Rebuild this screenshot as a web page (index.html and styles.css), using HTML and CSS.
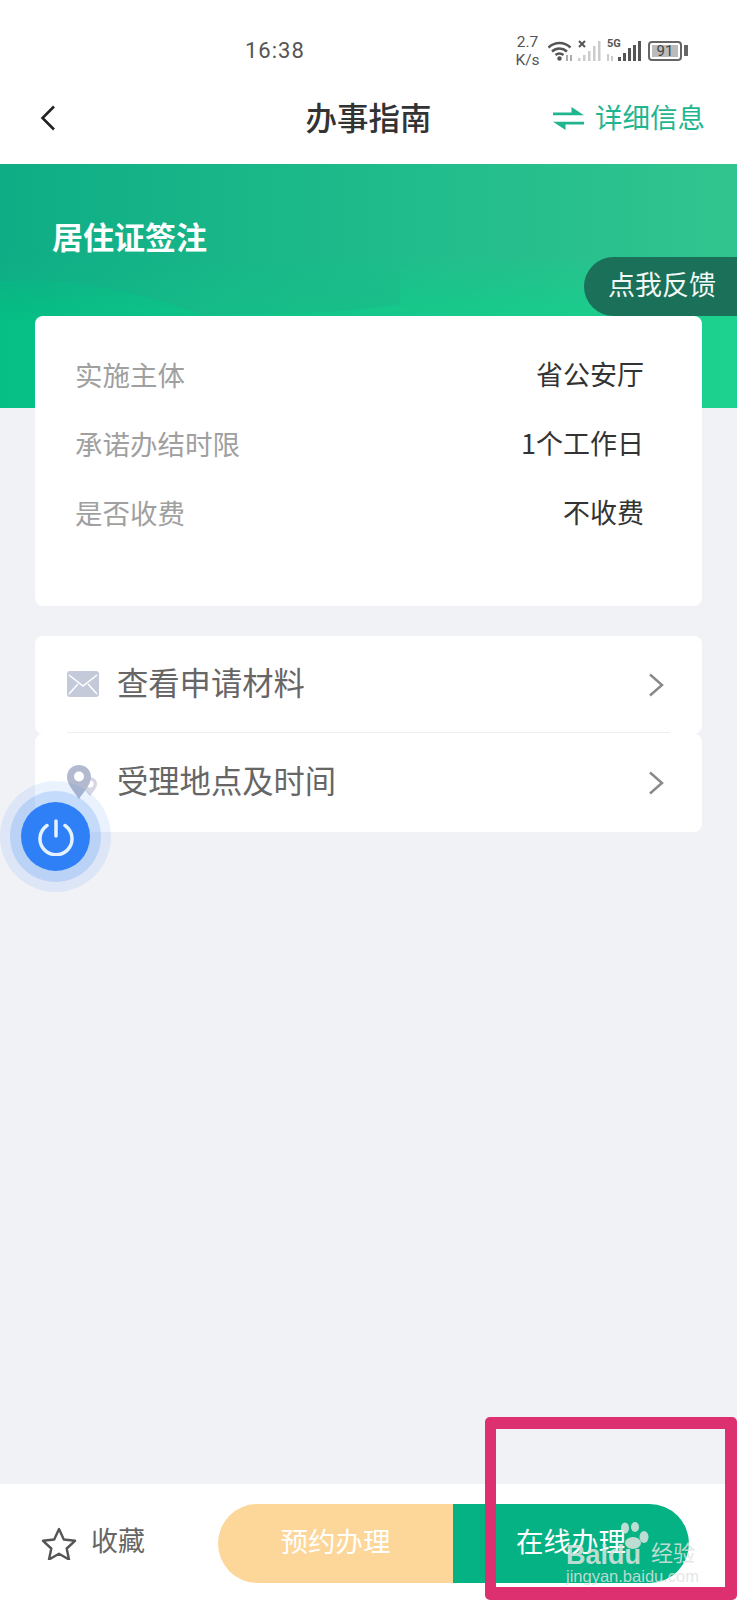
FILE: index.html
```html
<!DOCTYPE html>
<html lang="zh">
	<head>
		<meta charset="utf-8">
		<title>办事指南</title>
		<meta name="viewport" content="width=device-width, initial-scale=1.0">
		<link rel="stylesheet" href="styles.css">
	</head>
	<body>
		<div class="page">
			<div class="status">
				<span class="time">16:38</span>
				<div class="status-icons">
					<span class="speed">2.7<br>K/s</span>
					<svg width="26" height="22" viewBox="0 0 26 22" fill="none" stroke="#555" stroke-width="2.400">
						<path d="M0.500 7.500C7 1.500 16 1.500 22.500 7.500"/>
						<path d="M4 11.500C8.500 7.500 14.500 7.500 19 11.500"/>
						<path d="M7.500 15C10 13 13 13 15.500 15"/>
						<circle cx="11.500" cy="18.500" r="2.200" fill="#555" stroke="none"/>
						<path d="M19 15v6M23 15v6" stroke="#777" stroke-width="1.200"/>
					</svg>
					<svg width="24" height="22" viewBox="0 0 24 22" fill="#ccc">
						<path d="M1 1l6 6M7 1L1 7" stroke="#555" stroke-width="2"/>
						<rect x="0" y="18" width="2.500" height="3"/>
						<rect x="5" y="15" width="2.500" height="6"/>
						<rect x="10" y="11" width="2.500" height="10"/>
						<rect x="15" y="6" width="2.500" height="15"/>
						<rect x="20" y="1" width="2.500" height="20"/>
					</svg>
					<span class="sim">
						<span class="sim-label">5G</span>
						<svg width="34" height="22" viewBox="0 0 34 22" fill="#555">
							<rect x="0" y="14" width="2" height="7" fill="#ccc"/>
							<rect x="4" y="16" width="2" height="5" fill="#ccc"/>
							<rect x="11" y="17" width="3" height="4"/>
							<rect x="16" y="13" width="3" height="8"/>
							<rect x="21" y="8" width="3" height="13"/>
							<rect x="26" y="5" width="3" height="16"/>
							<rect x="31" y="1" width="3" height="20"/>
						</svg>
					</span>
					<span class="battery"><span class="battery-level">91</span></span>
					<span class="battery-tip"></span>
				</div>
			</div>

			<div class="nav">
				<svg class="back" width="16" height="26" viewBox="0 0 16 26" fill="none" stroke="#222" stroke-width="2.600">
					<path d="M14 1.500L2.500 13L14 24.500"/>
				</svg>
				<h1>办事指南</h1>
				<div class="detail">
					<svg width="31" height="23" viewBox="0 0 31 23" fill="#1fb58f">
						<path d="M0 5.500H18.500V0L31 8.300H0z"/>
						<path d="M31 17.500H12.500V23L0 14.700H31z"/>
					</svg>
					<span class="detail-text">详细信息</span>
				</div>
			</div>

			<div class="hero">
				<svg class="wave" width="737" height="244" viewBox="0 0 737 244">
					<defs>
						<linearGradient id="heroLeft" gradientUnits="userSpaceOnUse" x1="0" y1="0" x2="300" y2="0">
							<stop offset="0" stop-color="#10b387"/>
							<stop offset="1" stop-color="#17c088"/>
						</linearGradient>
						<linearGradient id="heroTop" x1="0" y1="0" x2="1" y2="0">
							<stop offset="0" stop-color="#0fad85"/>
							<stop offset="0.55" stop-color="#20bc8b"/>
							<stop offset="1" stop-color="#31c48f"/>
						</linearGradient>
						<linearGradient id="heroFade" x1="0" y1="0" x2="0" y2="1">
							<stop offset="0.38" stop-color="#fff"/>
							<stop offset="0.64" stop-color="#000"/>
						</linearGradient>
						<mask id="heroMask">
							<rect width="737" height="244" fill="url(#heroFade)"/>
						</mask>
					</defs>
					<path d="M0 118C40 114 100 118 167 139C180 143 190 147 200 151C280 150 340 150 400 140V0H0Z" fill="url(#heroLeft)"/>
					<rect width="737" height="244" fill="url(#heroTop)" mask="url(#heroMask)"/>
				</svg>
				<h2>居住证签注</h2>
				<div class="feedback">点我反馈</div>
			</div>

			<div class="content">
				<div class="card info">
					<div class="info-row"><span class="info-label">实施主体</span><span class="info-value">省公安厅</span></div>
					<div class="info-row"><span class="info-label">承诺办结时限</span><span class="info-value">1个工作日</span></div>
					<div class="info-row"><span class="info-label">是否收费</span><span class="info-value">不收费</span></div>
				</div>

				<div class="menu">
					<div class="card menu-item">
						<div class="menu-row menu-row-line">
							<svg width="32" height="26" viewBox="0 0 32 26">
								<rect width="32" height="26" rx="3" fill="#c5cadb"/>
								<path d="M2 4l14 11L30 4M2 23l9-10M30 23l-9-10" fill="none" stroke="#fff" stroke-width="1.500"/>
							</svg>
							<span class="menu-text">查看申请材料</span>
							<svg class="chevron" width="16" height="24" viewBox="0 0 16 24" fill="none" stroke="#888" stroke-width="2.400">
								<path d="M2 1.500L14 12L2 22.500"/>
							</svg>
						</div>
					</div>
					<div class="card menu-item">
						<div class="menu-row">
							<svg width="32" height="34" viewBox="0 0 32 34">
								<path d="M22 12c5 0 8 3 8 7 0 4-4 8-7 12-2-2-4-5-6-7z" fill="#d5d8e4"/>
								<circle cx="23" cy="19" r="3.500" fill="#fff"/>
								<path d="M12 0C5 0 0 5 0 12c0 7 7 15 12 22 5-7 12-15 12-22C24 5 19 0 12 0z" fill="#b3b9ce"/>
								<circle cx="12" cy="11.500" r="5" fill="#fff"/>
							</svg>
							<span class="menu-text">受理地点及时间</span>
							<svg class="chevron" width="16" height="24" viewBox="0 0 16 24" fill="none" stroke="#888" stroke-width="2.400">
								<path d="M2 1.500L14 12L2 22.500"/>
							</svg>
						</div>
					</div>
				</div>
			</div>

			<div class="bottom">
				<div class="fav">
					<svg width="36" height="33" viewBox="0 0 36 33" fill="none" stroke="#555" stroke-width="2.400" stroke-linejoin="round">
						<path d="M18 2l4.800 10.500 11.200 1.300-8.300 7.700 2.300 11-10-5.700-10 5.700 2.300-11L2 13.800l11.200-1.300z"/>
					</svg>
					<span class="fav-text">收藏</span>
				</div>
				<div class="actions">
					<div class="action action-book">预约办理</div>
					<div class="action action-online">在线办理</div>
				</div>
			</div>

			<div class="power">
				<svg width="38" height="38" viewBox="0 0 38 38" fill="none" stroke="#e4f1ff" stroke-width="3.500" stroke-linecap="round">
					<path d="M19 3v15"/>
					<path d="M10 7.500a16 16 0 1 0 18 0"/>
				</svg>
			</div>

			<div class="mark"></div>

			<div class="watermark">
				<svg class="paw" width="29" height="27" viewBox="0 0 29 27" fill="currentColor">
					<ellipse cx="5" cy="6" rx="4" ry="5.500"/>
					<ellipse cx="15" cy="5" rx="4" ry="5"/>
					<ellipse cx="24" cy="15" rx="4.500" ry="6"/>
					<ellipse cx="13" cy="21" rx="8" ry="6"/>
				</svg>
				<div class="wm-brand"><span class="wm-bai">Baidu</span><span class="wm-jy">经验</span></div>
				<div class="wm-url">jingyan.baidu.com</div>
			</div>
		</div>
	</body>
</html>
```

FILE: styles.css
```css
* {
	box-sizing: border-box;
}

body {
	margin: 0;
	background: #f1f2f6;
	font-family: "Noto Sans CJK SC", "Noto Sans", sans-serif;
}

.page {
	position: relative;
	display: flex;
	flex-direction: column;
	width: 737px;
	height: 1600px;
	overflow: hidden;
}

.status {
	display: flex;
	align-items: center;
	height: 88px;
	padding: 13px 0 0 245px;
	background: #fff;
}

.time {
	width: 268px;
	font-family: "Roboto", sans-serif;
	font-size: 22px;
	letter-spacing: 1px;
	color: #555;
}

.status-icons {
	display: flex;
	align-items: center;
	gap: 4px;
}

.speed {
	width: 29px;
	margin-right: 2px;
	font-family: "Roboto", sans-serif;
	font-size: 15.500px;
	line-height: 18px;
	text-align: center;
	color: #555;
}

.sim {
	position: relative;
	display: flex;
	margin-left: 1px;
}

.sim-label {
	position: absolute;
	top: -3px;
	left: 0;
	font-family: "Roboto", sans-serif;
	font-size: 11px;
	font-weight: 700;
	color: #555;
}

.battery {
	display: flex;
	align-items: center;
	width: 34px;
	height: 20px;
	margin-left: 3px;
	padding: 2px;
	border: 2px solid #666;
	border-radius: 4px;
}

.battery-level {
	flex: 1;
	height: 12px;
	background: #bbb;
	font-family: "Roboto", sans-serif;
	font-size: 15px;
	line-height: 12px;
	text-align: center;
	color: #444;
}

.battery-tip {
	width: 4px;
	height: 11px;
	margin-left: -2px;
	background: #666;
}

.nav {
	position: relative;
	display: flex;
	align-items: center;
	justify-content: space-between;
	height: 76px;
	padding: 0 32px 16px 40px;
	background: #fff;
}

.nav h1 {
	position: absolute;
	left: 0;
	right: 0;
	top: 10px;
	margin: 0;
	font-size: 31.500px;
	font-weight: 500;
	line-height: 36px;
	text-align: center;
	color: #333;
}

.detail {
	display: flex;
	align-items: center;
	gap: 11px;
	font-size: 27.500px;
	color: #1fb58f;
}

.detail-text {
	padding-bottom: 4px;
}

.hero {
	position: relative;
	height: 244px;
	padding: 48px 0 0 52px;
	background: linear-gradient(90deg, #05bf85 0%, #14c98a 50%, #1dd28f 100%);
}

.wave {
	position: absolute;
	top: 0;
	left: 0;
}

.hero h2 {
	position: relative;
	margin: 0;
	font-size: 31px;
	font-weight: 700;
	line-height: 48px;
	color: #fff;
}

.feedback {
	position: absolute;
	top: 93px;
	right: 0;
	width: 153px;
	height: 59px;
	padding-left: 24px;
	border-radius: 30px 0 0 30px;
	background: #1a7058;
	font-size: 27px;
	line-height: 54px;
	color: #f2f8f5;
}

.content {
	position: relative;
	margin-top: -92px;
	padding: 0 35px;
}

.card {
	background: #fff;
	border-radius: 8px;
}

.info {
	height: 290px;
	padding: 25px 58px 0 40px;
	font-size: 27.500px;
	color: #333;
}

.info-row {
	display: flex;
	justify-content: space-between;
	height: 69px;
	line-height: 66px;
}

.info-label {
	color: #a0a0a0;
}

.info-value {
	font-size: 27px;
}

.menu {
	margin-top: 30px;
}

.menu-item {
	height: 98px;
	padding: 0 32px;
}

.menu-row {
	display: flex;
	align-items: center;
	gap: 18px;
	height: 96px;
}

.menu-row-line {
	height: 97px;
	border-bottom: 1px solid #edeef2;
}

.menu-text {
	flex: 1;
	padding-bottom: 5px;
	font-size: 31.300px;
	color: #666;
}

.chevron {
	margin: 2px 6px 0 0;
}

.bottom {
	display: flex;
	align-items: center;
	height: 116px;
	margin-top: auto;
	padding: 3px 48px 0 41px;
	background: #fff;
}

.fav {
	display: flex;
	align-items: center;
	gap: 14px;
	width: 177px;
	font-size: 27px;
	color: #666;
}

.fav-text {
	padding-bottom: 8px;
}

.actions {
	display: flex;
	flex: 1;
	height: 79px;
	border-radius: 40px;
	overflow: hidden;
	font-size: 27.500px;
	line-height: 72px;
	text-align: center;
	color: #fff;
}

.action-book {
	width: 235px;
	background: #fdd699;
}

.action-online {
	flex: 1;
	background: #05b284;
}

/* floating button over the list */
.power {
	position: absolute;
	left: 21px;
	top: 802px;
	display: flex;
	align-items: center;
	justify-content: center;
	width: 69px;
	height: 69px;
	border-radius: 50%;
	background: #2f80f7;
	box-shadow: 0 0 0 11px rgba(47, 128, 247, 0.2), 0 0 0 21px rgba(47, 128, 247, 0.1);
}

/* annotation drawn on the screenshot */
.mark {
	position: absolute;
	left: 485px;
	top: 1417px;
	width: 252px;
	height: 183px;
	border: solid #dd3070;
	border-width: 12px 12px 13px 11px;
	border-radius: 5px;
}

.watermark {
	position: absolute;
	left: 566px;
	top: 1522px;
	width: 135px;
	height: 62px;
	color: rgba(222, 228, 225, 0.85);
}

.paw {
	position: absolute;
	left: 54px;
	top: 0;
}

.wm-brand {
	position: absolute;
	left: 0;
	top: 19px;
	display: flex;
	align-items: flex-start;
	gap: 4px;
	white-space: nowrap;
}

.wm-bai {
	width: 81px;
	font-family: "Liberation Sans", sans-serif;
	font-size: 27px;
	font-weight: 700;
	line-height: 28px;
}

.wm-jy {
	margin-top: -4px;
	font-size: 22px;
	line-height: 28px;
}

.wm-url {
	position: absolute;
	left: 0;
	top: 45px;
	font-family: "Liberation Sans", sans-serif;
	font-size: 16.500px;
	line-height: 18px;
	white-space: nowrap;
}
```
